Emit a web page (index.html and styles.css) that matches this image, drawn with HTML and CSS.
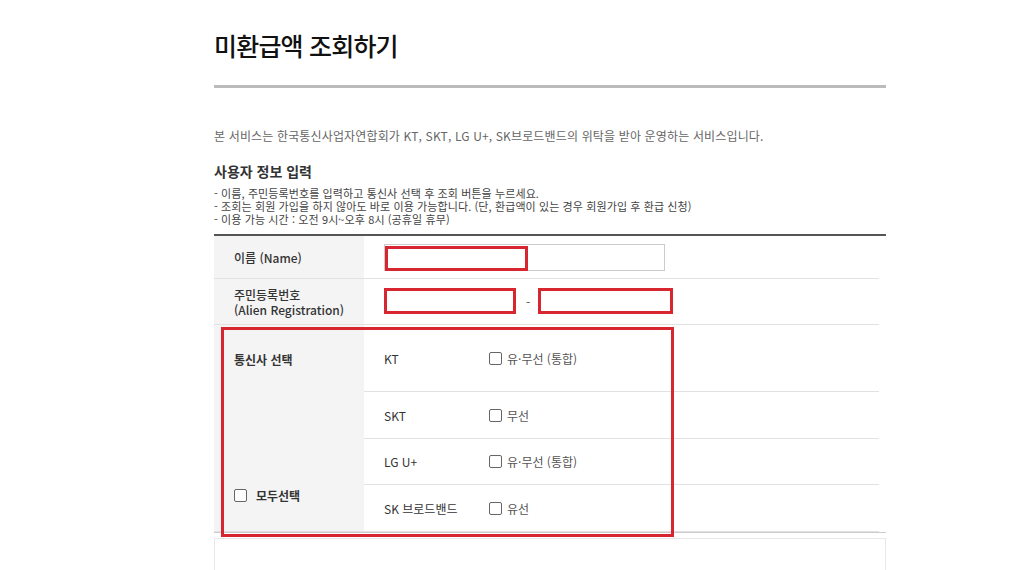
FILE: index.html
```html
<!DOCTYPE html>
<html lang="ko">
<head>
  <meta charset="UTF-8" />
  <title>미환급액 조회하기</title>
  <link rel="stylesheet" href="styles.css">
</head>
<body>
  <div class="wrap">
    <h1 class="page-title">미환급액 조회하기</h1>

    <p class="intro">본 서비스는 한국통신사업자연합회가 KT, SKT, LG U+, SK브로드밴드의 위탁을 받아 운영하는 서비스입니다.</p>

    <h2 class="sub-title">사용자 정보 입력</h2>
    <ul class="notes">
      <li>- 이름, 주민등록번호를 입력하고 통신사 선택 후 조회 버튼을 누르세요.</li>
      <li>- 조회는 회원 가입을 하지 않아도 바로 이용 가능합니다. (단, 환급액이 있는 경우 회원가입 후 환급 신청)</li>
      <li>- 이용 가능 시간 : 오전 9시~오후 8시 (공휴일 휴무)</li>
    </ul>

    <div class="form-table">
      <div class="row">
        <div class="label">이름 (Name)</div>
        <div class="field">
          <span class="name-box">
            <input type="text" class="input-name">
            <span class="mark mark-name"></span>
          </span>
        </div>
      </div>

      <div class="row row-reg">
        <div class="label">주민등록번호<br>(Alien Registration)</div>
        <div class="field">
          <input type="text" class="input-reg">
          <span class="dash">-</span>
          <input type="text" class="input-reg input-reg2">
        </div>
      </div>

      <div class="row row-carrier">
        <div class="label label-carrier">
          <span class="bold">통신사 선택</span>
          <label class="all-check"><input type="checkbox" class="chk"> 모두선택</label>
        </div>
        <div class="carriers">
          <div class="carrier carrier-kt">
            <span class="carrier-name">KT</span>
            <label class="opt"><input type="checkbox" class="chk"> 유·무선 (통합)</label>
          </div>
          <div class="carrier">
            <span class="carrier-name">SKT</span>
            <label class="opt"><input type="checkbox" class="chk"> 무선</label>
          </div>
          <div class="carrier carrier-lg">
            <span class="carrier-name">LG U+</span>
            <label class="opt"><input type="checkbox" class="chk"> 유·무선 (통합)</label>
          </div>
          <div class="carrier">
            <span class="carrier-name">SK 브로드밴드</span>
            <label class="opt"><input type="checkbox" class="chk"> 유선</label>
          </div>
        </div>
      </div>

      <div class="mark mark-carrier"></div>
    </div>

    <div class="next-box"></div>
  </div>
</body>
</html>
```

FILE: styles.css
```css
* {
  margin: 0;
  padding: 0;
  box-sizing: border-box;
}

body {
  font-family: "Noto Sans CJK KR", "Noto Sans", sans-serif;
  background-color: #ffffff;
  color: #333;
}

.wrap {
  width: 672px;
  margin-left: 214px;
}

.page-title {
  font-size: 25px;
  font-weight: 500;
  letter-spacing: -0.8px;
  line-height: 30px;
  color: #111;
  padding-top: 30px;
  padding-bottom: 25px;
  border-bottom: 3px solid #bbbbbb;
}

.intro {
  font-size: 12px;
  line-height: 18px;
  color: #666;
  letter-spacing: 0.15px;
  margin-top: 39px;
}

.sub-title {
  font-size: 14px;
  font-weight: 700;
  line-height: 20px;
  color: #333;
  margin-top: 16px;
}

.notes {
  list-style: none;
  margin-top: 6px;
  font-size: 11px;
  line-height: 13px;
  color: #444;
  letter-spacing: 0.1px;
}

.form-table {
  position: relative;
  margin-top: 8px;
  border-top: 2px solid #555;
  border-bottom: 1px solid #cccccc;
}

.row {
  display: grid;
  grid-template-columns: 150px 1fr;
  width: 665px;
  border-bottom: 1px solid #e2e2e2;
}

.row:last-of-type {
  border-bottom: none;
}

.label {
  background-color: #f4f4f4;
  padding-left: 20px;
  font-size: 12px;
  font-weight: 500;
  line-height: 15px;
  color: #333;
  display: flex;
  flex-direction: column;
  justify-content: center;
}

.field {
  display: flex;
  align-items: center;
  padding-left: 20px;
  height: 42px;
}

.row-reg .field {
  height: 45px;
}

.name-box {
  position: relative;
  display: block;
}

.input-name {
  display: block;
  width: 281px;
  height: 27px;
  border: 1px solid #cccccc;
  background: #fff;
}

.mark {
  position: absolute;
  border: 3px solid #d7262f;
  pointer-events: none;
}

.mark-name {
  left: 1px;
  top: 2px;
  width: 143px;
  height: 25px;
}

.input-reg {
  width: 132px;
  height: 26px;
  border: 3px solid #d7262f;
  background: #fff;
  margin-top: -2px;
}

.input-reg2 {
  width: 135px;
}

.dash {
  font-size: 12px;
  color: #555;
  margin: 0 8px 0 10px;
}

.label-carrier {
  justify-content: space-between;
  padding-top: 27px;
  padding-bottom: 28px;
}

.bold {
  font-weight: 700;
}

.all-check {
  display: flex;
  align-items: center;
  gap: 9px;
  font-weight: 700;
}

.chk {
  appearance: none;
  -webkit-appearance: none;
  width: 13px;
  height: 13px;
  border: 1px solid #666;
  border-radius: 2px;
  background: #fff;
  margin: 0;
}

.carrier {
  display: flex;
  align-items: center;
  height: 47px;
  padding-left: 20px;
  border-bottom: 1px solid #e2e2e2;
  font-size: 12px;
}

.carrier-kt {
  height: 67px;
}

.carrier-lg {
  height: 46px;
}

.carrier:last-child {
  border-bottom: none;
  height: 46px;
}

.carrier-name {
  width: 105px;
  color: #333;
}

.opt {
  display: flex;
  align-items: center;
  gap: 5px;
  color: #555;
}

.mark-carrier {
  left: 7px;
  top: 91px;
  width: 453px;
  height: 210px;
}

.next-box {
  margin-top: 5px;
  height: 40px;
  border: 1px solid #e8e8e8;
}
```
